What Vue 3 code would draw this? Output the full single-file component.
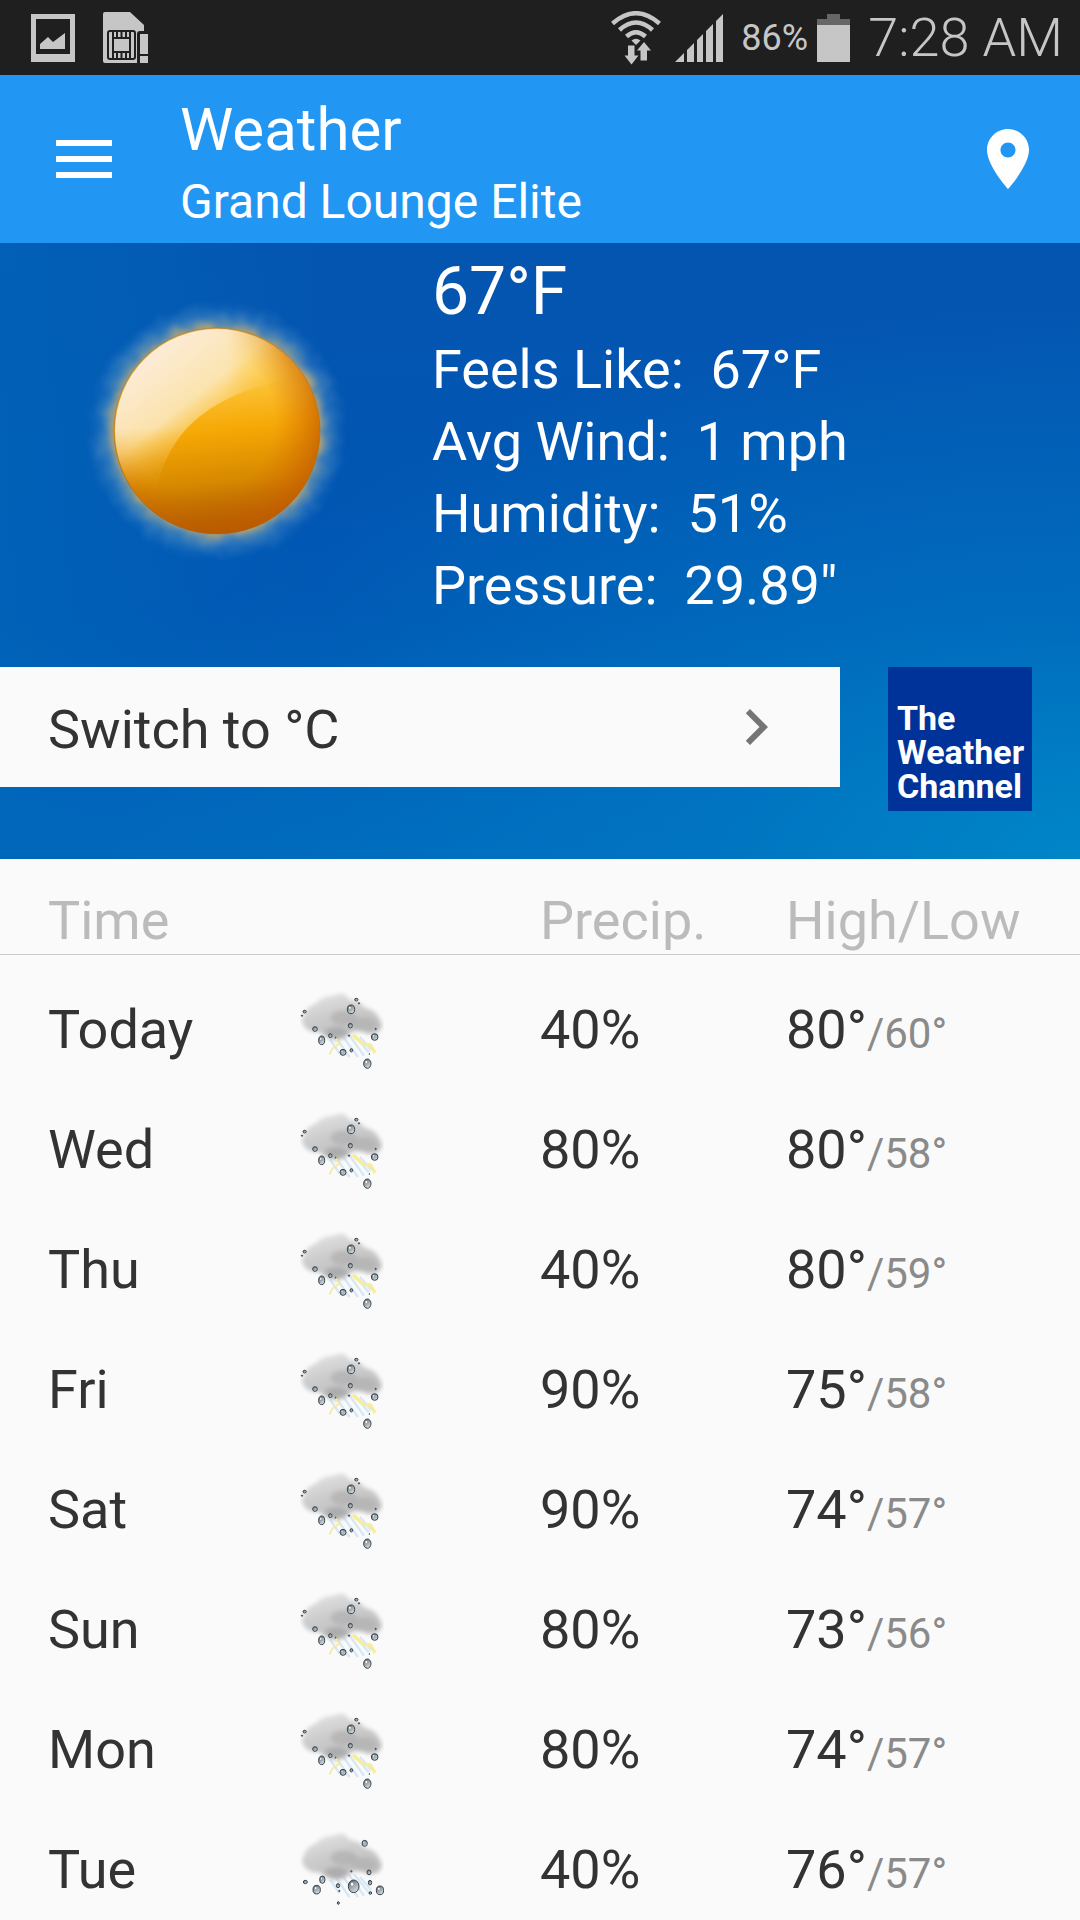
<script setup>
import { ref, computed } from 'vue'

const unit = ref('F')
const nextUnit = computed(() => (unit.value === 'F' ? 'C' : 'F'))

const toUnit = (f) => (unit.value === 'F' ? f : Math.round((f - 32) * 5 / 9))

const toggleUnit = () => {
  unit.value = nextUnit.value
}

const current = {
  temp: 67,
  feelsLike: 67,
  wind: '1 mph',
  humidity: '51%',
  pressure: '29.89"'
}

const forecast = [
  { day: 'Today', icon: 'storm', precip: 40, high: 80, low: 60 },
  { day: 'Wed', icon: 'storm', precip: 80, high: 80, low: 58 },
  { day: 'Thu', icon: 'storm', precip: 40, high: 80, low: 59 },
  { day: 'Fri', icon: 'storm', precip: 90, high: 75, low: 58 },
  { day: 'Sat', icon: 'storm', precip: 90, high: 74, low: 57 },
  { day: 'Sun', icon: 'storm', precip: 80, high: 73, low: 56 },
  { day: 'Mon', icon: 'storm', precip: 80, high: 74, low: 57 },
  { day: 'Tue', icon: 'rain', precip: 40, high: 76, low: 57 }
]

// water drops: x, y, rx, ry
const drops = {
  storm: [
    [74, 128, 5, 4], [66, 140, 2, 2], [105, 180, 7, 7], [125, 214, 9, 13],
    [151, 200, 5, 6], [167, 206, 1, 2], [213, 121, 11, 13], [229, 92, 5, 4],
    [237, 103, 2, 2], [211, 170, 6, 7], [207, 200, 2, 2], [287, 180, 2, 2],
    [284, 204, 10, 10], [189, 250, 9, 9], [214, 244, 4, 5], [262, 284, 11, 14],
    [268, 255, 1, 1]
  ],
  rain: [
    [254, 103, 8, 9], [267, 190, 6, 7], [270, 221, 5, 7], [271, 252, 4, 4],
    [76, 219, 6, 5], [127, 212, 8, 11], [110, 242, 11, 13], [174, 230, 5, 6],
    [178, 246, 2, 2], [175, 282, 3, 4], [221, 232, 16, 19], [214, 187, 2, 2],
    [300, 244, 11, 13]
  ]
}
</script>

<template>
  <div class="app">
    <div class="status-bar">
      <svg class="icon-picture" width="44" height="48" viewBox="0 0 44 48" fill="#c6c6c6">
        <path fill-rule="evenodd" d="M0 0h44v48H0zM5 5v35h34V5z" />
        <path d="M9 35v-5l8-7 5 5 12-9v16z" />
      </svg>
      <svg width="45" height="52" viewBox="0 0 45 52">
        <path fill="#c6c6c6" d="M2 0h25l14 13v6h-4q-3 0-3 3v29H2q-2 0-2-2V2q0-2 2-2z" />
        <rect x="5" y="19" width="27" height="28" rx="2" fill="#c6c6c6" stroke="#1f1f1f" stroke-width="2" />
        <path fill="none" d="M10 19v28M27 19v28M10 26h17M10 40h17M14 19v7M18.500 19v7M23 19v7M14 40v7M18.500 40v7M23 40v7" stroke="#1f1f1f" stroke-width="2" />
        <path fill="#c6c6c6" d="M37 22h8v20h-8zM37 44h8v7h-8z" />
      </svg>

      <svg class="icon-wifi" width="50" height="54" viewBox="0 0 50 54">
        <g fill="none" stroke="#c6c6c6" stroke-width="4.500">
          <path d="M1.500 12.500Q25-8 48.500 12.500" />
          <path d="M8.500 19Q25 4 41.500 19" />
          <path d="M15.500 25.500Q25 17 34.500 25.500" />
        </g>
        <path fill="#c6c6c6" d="M20.500 29.500Q25 26 29.500 29.500L25 34z" />
        <path fill="#c6c6c6" d="M17 34.500h6.500V44.500h4L20.500 53.500 13.500 44.500H17z" />
        <path fill="#c6c6c6" d="M29.500 49.500h6.500V39.500h4L33 31 26 39.500h3.500z" />
      </svg>
      <svg class="icon-signal" width="48" height="48" viewBox="0 0 48 48" fill="#c6c6c6">
        <path d="M0 48l9-9v9zM12 36l7-7v19h-7zM22 26l6-6v28h-6zM31 17l7-7v38h-7zM41 7l7-7v48h-7z" />
      </svg>
      <span class="battery-level">86%</span>
      <svg width="33" height="48" viewBox="0 0 33 48">
        <path fill="#666" d="M10 0h13v5h10v7H0V5h10z" />
        <path fill="#c6c6c6" d="M0 11h33v37H0z" />
      </svg>
      <span class="clock">7:28 AM</span>
    </div>

    <header class="toolbar">
      <button class="menu" type="button" aria-label="Menu">
        <svg width="56" height="38" viewBox="0 0 56 38" fill="#fff">
          <path d="M0 0h56v6H0zM0 16h56v6H0zM0 32h56v6H0z" />
        </svg>
      </button>
      <div class="titles">
        <h1>Weather</h1>
        <h2>Grand Lounge Elite</h2>
      </div>
      <button class="locate" type="button" aria-label="Location">
        <svg width="72" height="72" viewBox="0 0 24 24" fill="#fff">
          <path d="M12 2C8.130 2 5 5.130 5 9c0 5.250 7 13 7 13s7-7.750 7-13c0-3.870-3.130-7-7-7zm0 9.500c-1.380 0-2.500-1.120-2.500-2.500s1.120-2.500 2.500-2.500 2.500 1.120 2.500 2.500-1.120 2.500-2.500 2.500z" />
        </svg>
      </button>
    </header>

    <section class="hero">
      <div class="current">
        <svg class="sun" width="288" height="288" viewBox="0 0 288 288">
          <defs>
            <radialGradient id="sun-glow">
              <stop offset="0.780" stop-color="#b9a370" stop-opacity="0.950" />
              <stop offset="0.820" stop-color="#8fa5a2" stop-opacity="0.700" />
              <stop offset="0.890" stop-color="#5f98c6" stop-opacity="0.400" />
              <stop offset="1" stop-color="#3a7cc8" stop-opacity="0" />
            </radialGradient>
            <linearGradient id="sun-body" x1="0.420" y1="0" x2="0.520" y2="1">
              <stop offset="0" stop-color="#ffd868" />
              <stop offset="0.250" stop-color="#fdc840" />
              <stop offset="0.500" stop-color="#f6a805" />
              <stop offset="0.750" stop-color="#d68800" />
              <stop offset="1" stop-color="#a04e00" />
            </linearGradient>
            <radialGradient id="sun-rim" cx="0.420" cy="0.450" r="0.600">
              <stop offset="0.600" stop-color="#d97000" stop-opacity="0" />
              <stop offset="1" stop-color="#c45c00" stop-opacity="0.800" />
            </radialGradient>
            <linearGradient id="sun-shine" x1="0.150" y1="0.150" x2="0.600" y2="0.720">
              <stop offset="0" stop-color="#fcebd6" />
              <stop offset="0.400" stop-color="#fbe6b8" stop-opacity="0.920" />
              <stop offset="0.750" stop-color="#fccb50" stop-opacity="0.200" />
              <stop offset="1" stop-color="#fccb50" stop-opacity="0" />
            </linearGradient>
            <linearGradient id="sun-fade" x1="0.300" y1="0.200" x2="0.360" y2="1">
              <stop offset="0.500" stop-color="#fff" />
              <stop offset="1" stop-color="#fff" stop-opacity="0" />
            </linearGradient>
            <linearGradient id="sun-fade-side" x1="0" y1="0" x2="1" y2="0">
              <stop offset="0.550" stop-color="#fff" />
              <stop offset="0.850" stop-color="#fff" stop-opacity="0" />
            </linearGradient>
            <mask id="sun-mask">
              <path d="M40 40H250V88Q160 96 116 140Q92 166 84 204H40z" fill="url(#sun-fade)" />
            </mask>
            <mask id="sun-mask-side">
              <path d="M36 36H252V252H36z" fill="url(#sun-fade-side)" />
            </mask>
            <filter id="sun-flare" x="-10%" y="-10%" width="120%" height="120%">
              <feTurbulence type="fractalNoise" baseFrequency="0.060" numOctaves="2" seed="4" />
              <feDisplacementMap in="SourceGraphic" scale="14" xChannelSelector="R" yChannelSelector="G" />
              <feGaussianBlur stdDeviation="2" />
            </filter>
          </defs>
          <circle cx="145" cy="144" r="130" fill="url(#sun-glow)" filter="url(#sun-flare)" />
          <circle cx="145" cy="144" r="103" fill="url(#sun-body)" />
          <circle cx="145" cy="144" r="103" fill="url(#sun-rim)" />
          <g mask="url(#sun-mask-side)">
            <circle cx="145" cy="144" r="102" fill="url(#sun-shine)" mask="url(#sun-mask)" />
          </g>
          <circle cx="145" cy="144" r="103" fill="none" stroke="#9a6a24" stroke-opacity="0.500" stroke-width="1" />
        </svg>
        <div class="details">
          <p class="temp">{{ toUnit(current.temp) }}°{{ unit }}</p>
          <p>Feels Like:&nbsp; {{ toUnit(current.feelsLike) }}°{{ unit }}</p>
          <p>Avg Wind:&nbsp; {{ current.wind }}</p>
          <p>Humidity:&nbsp; {{ current.humidity }}</p>
          <p>Pressure:&nbsp; {{ current.pressure }}</p>
        </div>
      </div>
      <div class="actions">
        <button class="switch" type="button" @click="toggleUnit">
          <span class="switch-label">Switch to °{{ nextUnit }}</span>
          <svg width="72" height="72" viewBox="0 0 24 24" fill="#757575">
            <path d="M10 6L8.590 7.410 13.170 12l-4.580 4.590L10 18l6-6z" />
          </svg>
        </button>
        <div class="provider">The<br>Weather<br>Channel</div>
      </div>
    </section>

    <!-- gradients shared by all forecast icons -->
    <svg class="shared-defs" width="0" height="0" aria-hidden="true">
      <defs>
        <filter id="cloud-soft" x="-20%" y="-20%" width="140%" height="140%">
          <feGaussianBlur stdDeviation="7" />
        </filter>
        <filter id="rain-soft">
          <feGaussianBlur stdDeviation="2" />
        </filter>
        <linearGradient id="cloud-fill" x1="0" y1="0" x2="0.500" y2="1">
          <stop offset="0" stop-color="#e8e8e8" />
          <stop offset="0.500" stop-color="#cdcdcd" />
          <stop offset="1" stop-color="#bcbcbe" />
        </linearGradient>
        <linearGradient id="drop-fill" x1="0" y1="0" x2="0.600" y2="1">
          <stop offset="0" stop-color="#4a555c" />
          <stop offset="0.500" stop-color="#98a2a9" />
          <stop offset="1" stop-color="#d4dadf" />
        </linearGradient>
      </defs>
    </svg>

    <main class="forecast">
      <table>
        <thead>
          <tr>
            <th class="col-time" scope="col">Time</th>
            <th class="col-icon"></th>
            <th class="col-precip" scope="col">Precip.</th>
            <th scope="col">High/Low</th>
          </tr>
        </thead>
        <tbody>
          <tr v-for="row in forecast" :key="row.day">
            <td>{{ row.day }}</td>
            <td>
              <svg class="weather-icon" width="84" height="84" viewBox="60 54 252 252">
                <g filter="url(#rain-soft)">
                  <path
                    fill="none"
                    stroke="#d6e7f6"
                    stroke-width="7"
                    d="M150 212l28 40M170 208l38 56M190 204l44 60M206 196l46 64M222 196l44 54M240 204l34 40"
                  />
                </g>
                <g filter="url(#cloud-soft)">
                  <path
                    fill="url(#cloud-fill)"
                    d="M66 158Q70 118 108 102Q130 80 162 80Q190 62 208 92Q236 94 254 116Q292 122 306 168Q300 200 262 194Q236 180 214 190Q190 218 160 212Q136 206 118 190Q76 190 66 158z"
                  />
                  <ellipse cx="192" cy="146" rx="40" ry="22" fill="#aaa" opacity="0.600" />
                  <ellipse cx="250" cy="164" rx="38" ry="20" fill="#b0b0b0" opacity="0.700" />
                  <ellipse cx="168" cy="190" rx="34" ry="16" fill="#a4a4a6" opacity="0.700" />
                </g>
                <g v-if="row.icon === 'storm'" filter="url(#rain-soft)">
                  <path fill="none" stroke="#f8ee98" stroke-width="10" stroke-linejoin="round" d="M218 198l32 28 22 2 13 24" />
                  <path fill="none" stroke="#f3ea9e" stroke-width="5" d="M166 206l12 18-20 14-10 18" />
                </g>
                <g v-for="(d, i) in drops[row.icon]" :key="i">
                  <ellipse :cx="d[0]" :cy="d[1]" :rx="d[2]" :ry="d[3]" fill="url(#drop-fill)" stroke="#39434b" stroke-width="3" />
                  <ellipse v-if="d[2] > 7" :cx="d[0] - d[2] * 0.3" :cy="d[1] - d[3] * 0.35" :rx="d[2] * 0.25" :ry="d[3] * 0.25" fill="#fff" />
                </g>
              </svg>
            </td>
            <td>{{ row.precip }}%</td>
            <td>{{ toUnit(row.high) }}°<span class="low">/{{ toUnit(row.low) }}°</span></td>
          </tr>
        </tbody>
      </table>
    </main>
  </div>
</template>

<style>
body {
  margin: 0;
  background: #fafafa;
}
</style>

<style scoped>
.app {
  display: flex;
  flex-direction: column;
  height: 100vh;
  overflow: hidden;
  font-family: Roboto, "Noto Sans", sans-serif;
  font-size: 54px;
  color: #333;
  background: #fafafa;
}
svg { display: block; flex: none; }
h1, h2, p { margin: 0; font-weight: 400; }
button {
  padding: 0;
  border: 0;
  background: none;
  font: inherit;
  color: inherit;
  cursor: pointer;
}

.status-bar {
  flex: none;
  display: flex;
  align-items: center;
  box-sizing: border-box;
  height: 75px;
  padding: 0 17px 0 31px;
  background: #1f1f1f;
  color: #c6c6c6;
}
.icon-picture { margin-right: 28px; }
.icon-wifi { margin-left: auto; }
.icon-signal { margin: 0 18px 0 14px; }
.battery-level { font-size: 36px; margin-right: 9px; }
.clock { margin-left: 18px; font-weight: 300; }

.toolbar {
  flex: none;
  display: flex;
  align-items: center;
  box-sizing: border-box;
  height: 168px;
  padding: 0 36px 0 56px;
  background: #2196f3;
  color: #fff;
}
.titles {
  flex: 1;
  padding: 8px 0 0 68px;
}
.titles h1 { font-size: 60px; line-height: 72px; }
.titles h2 { font-size: 48px; line-height: 60px; margin-top: 6px; }

.hero {
  flex: none;
  padding-bottom: 48px;
  background:
    radial-gradient(ellipse 90% 90% at 100% 100%, rgba(0, 134, 200, 1), rgba(0, 124, 196, 0.6) 40%, rgba(0, 100, 185, 0) 100%),
    linear-gradient(90deg, rgba(0, 104, 186, 0.6), rgba(0, 88, 180, 0) 30%),
    linear-gradient(180deg, #0455b0, #0057b4 60%, #0068bc);
  color: #fff;
}
.current { display: flex; }
.sun { margin: 44px 72px 0; }
.details {
  padding: 7px 0 45px;
  line-height: 72px;
}
.temp { font-size: 66px; line-height: 84px; }

.actions {
  display: flex;
  align-items: flex-start;
  gap: 48px;
  padding-right: 48px;
}
.switch {
  flex: 1;
  display: flex;
  align-items: center;
  justify-content: space-between;
  height: 120px;
  padding: 0 48px;
  background: #fafafa;
  color: #333;
}
.switch-label { padding-top: 4px; }
.provider {
  box-sizing: border-box;
  width: 144px;
  height: 144px;
  padding: 34px 0 0 9px;
  background: #039;
  font-size: 34px;
  font-weight: 700;
  line-height: 34px;
}
.shared-defs { position: absolute; }

.forecast {
  flex: 1;
  min-height: 0;
  overflow: hidden;
}
table {
  width: 100%;
  table-layout: fixed;
  border-collapse: separate;
  border-spacing: 0;
}
th, td {
  padding: 0;
  text-align: left;
  white-space: nowrap;
}
th:first-child, td:first-child { padding-left: 48px; }
th {
  height: 66px;
  padding-top: 29px;
  border-bottom: 1px solid #ccc;
  font-weight: 400;
  line-height: 66px;
  color: #bbb;
}
tbody::before {
  content: "";
  display: table-row;
  height: 14px;
}
td { height: 120px; }
.col-time { width: 252px; }
.col-icon { width: 240px; }
.col-precip { width: 246px; }
.low { font-size: 42px; color: #8a8a8a; }
</style>
